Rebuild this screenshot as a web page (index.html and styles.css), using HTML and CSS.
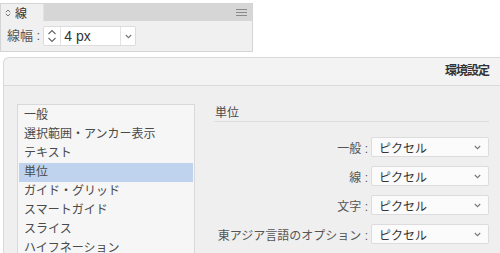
FILE: index.html
```html
<!DOCTYPE html>
<html lang="ja">
<head>
  <meta charset="UTF-8" />
  <meta name="viewport" content="width=device-width, initial-scale=1.0"/>
  <title>線 / 環境設定</title>
  <link rel="stylesheet" href="styles.css">
</head>
<body>

<div class="stroke-panel">
  <div class="panel-tabs">
    <div class="panel-tab">
      <svg class="tab-icon" width="6" height="8" viewBox="0 0 6 8"><path d="M0.8 3.2 L3 1 L5.2 3.2 M0.8 4.8 L3 7 L5.2 4.8" fill="none" stroke="#777" stroke-width="1"/></svg>
      <span>線</span>
    </div>
    <div class="panel-tabs-fill">
      <svg width="11" height="7" viewBox="0 0 11 7"><path d="M0 0.5 H11 M0 3.5 H11 M0 6.5 H11" stroke="#8a8a8a" stroke-width="1"/></svg>
    </div>
  </div>
  <div class="panel-body">
    <span class="field-label">線幅 :</span>
    <div class="stepper">
      <span class="stepper-arrows">
        <svg width="10" height="14" viewBox="0 0 10 14"><path d="M1.5 5 L5 1.5 L8.5 5 M1.5 9 L5 12.5 L8.5 9" fill="none" stroke="#666" stroke-width="1.1"/></svg>
      </span>
      <span class="stepper-value">4 px</span>
      <span class="stepper-drop">
        <svg width="7" height="5" viewBox="0 0 7 5"><path d="M0.8 1 L3.5 3.7 L6.2 1" fill="none" stroke="#777" stroke-width="1.1"/></svg>
      </span>
    </div>
  </div>
</div>

<div class="prefs">
  <div class="prefs-title">環境設定</div>
  <div class="prefs-content">
    <ul class="category-list">
      <li>一般</li>
      <li>選択範囲・アンカー表示</li>
      <li>テキスト</li>
      <li class="selected">単位</li>
      <li>ガイド・グリッド</li>
      <li>スマートガイド</li>
      <li>スライス</li>
      <li>ハイフネーション</li>
    </ul>

    <section class="units">
      <h3>単位</h3>
      <div class="unit-rows">
        <div class="unit-row">
          <label>一般 :</label>
          <div class="select">ピクセル<svg width="7" height="5" viewBox="0 0 7 5"><path d="M0.8 1 L3.5 3.7 L6.2 1" fill="none" stroke="#777" stroke-width="1.1"/></svg></div>
        </div>
        <div class="unit-row">
          <label>線 :</label>
          <div class="select">ピクセル<svg width="7" height="5" viewBox="0 0 7 5"><path d="M0.8 1 L3.5 3.7 L6.2 1" fill="none" stroke="#777" stroke-width="1.1"/></svg></div>
        </div>
        <div class="unit-row">
          <label>文字 :</label>
          <div class="select">ピクセル<svg width="7" height="5" viewBox="0 0 7 5"><path d="M0.8 1 L3.5 3.7 L6.2 1" fill="none" stroke="#777" stroke-width="1.1"/></svg></div>
        </div>
        <div class="unit-row">
          <label>東アジア言語のオプション :</label>
          <div class="select">ピクセル<svg width="7" height="5" viewBox="0 0 7 5"><path d="M0.8 1 L3.5 3.7 L6.2 1" fill="none" stroke="#777" stroke-width="1.1"/></svg></div>
        </div>
      </div>
    </section>
  </div>
</div>

</body>
</html>
```

FILE: styles.css
```css
* {
  box-sizing: border-box;
}

body {
  margin: 0;
  background: #ffffff;
  font-family: "Liberation Sans", "Noto Sans CJK JP", sans-serif;
  font-size: 12px;
  color: #4a4a4a;
  overflow: hidden;
  height: 253px;
}

/* stroke panel */

.stroke-panel {
  margin-top: 3px;
  width: 253px;
  border: 1px solid #d4d4d4;
  background: #f0f0f0;
}

.panel-tabs {
  display: flex;
  height: 17px;
}

.panel-tab {
  width: 42px;
  display: flex;
  align-items: center;
  gap: 4px;
  padding-left: 4px;
  font-size: 12px;
  color: #333;
  background: #f0f0f0;
}

.panel-tabs-fill {
  flex: 1;
  display: flex;
  align-items: center;
  justify-content: flex-end;
  padding-right: 5px;
  background: #d6d6d6;
  border-left: 1px solid #e2e2e2;
}

.panel-body {
  height: 30px;
  display: flex;
  align-items: flex-start;
  padding: 5px 0 0 6px;
}

.field-label {
  font-size: 13px;
  color: #555;
  line-height: 20px;
  margin-right: 3px;
}

.stepper {
  display: flex;
  height: 20px;
  background: #fff;
  border: 1px solid #dcdcdc;
  border-radius: 2px;
}

.stepper-arrows {
  width: 17px;
  display: flex;
  align-items: center;
  justify-content: center;
  border-right: 1px solid #e2e2e2;
}

.stepper-value {
  width: 59px;
  padding-left: 3px;
  font-size: 14px;
  line-height: 18px;
  color: #333;
}

.stepper-drop {
  width: 15px;
  display: flex;
  align-items: center;
  justify-content: center;
  border-left: 1px solid #e2e2e2;
}

/* preferences dialog */

.prefs {
  margin: 5px 0 0 3px;
  border: 1px solid #d9d9d9;
  border-right: none;
  border-bottom: none;
  border-radius: 6px 0 0 0;
  background: #efefef;
  height: 200px;
}

.prefs-title {
  height: 28px;
  border-bottom: 1px solid #dadada;
  background: #f3f3f3;
  border-radius: 6px 0 0 0;
  text-align: right;
  padding-right: 11px;
  font-weight: bold;
  font-size: 12px;
  letter-spacing: -1px;
  line-height: 27px;
  color: #333;
}

.prefs-content {
  display: flex;
  gap: 19px;
  padding: 18px 11px 0 13px;
}

.category-list {
  list-style: none;
  margin: 0;
  padding: 1px;
  width: 178px;
  height: 160px;
  background: #f6f6f6;
  border: 1px solid #d9d9d9;
  border-bottom: none;
}

.category-list li {
  height: 19px;
  line-height: 19px;
  padding-left: 5px;
  font-size: 12px;
  color: #4a4a4a;
}

.category-list li.selected {
  background: #bfd3ee;
}

.units {
  flex: 1;
}

.units h3 {
  margin: 0;
  height: 18px;
  padding: 1px 0 0 1px;
  line-height: 16px;
  font-size: 12px;
  font-weight: normal;
  color: #4a4a4a;
  border-bottom: 1px solid #dedede;
}

.unit-rows {
  display: flex;
  flex-direction: column;
  gap: 9px;
  margin-top: 15px;
}

.unit-row {
  display: flex;
  justify-content: flex-end;
  align-items: center;
  gap: 3px;
}

.unit-row label {
  font-size: 12px;
  color: #555;
}

.select {
  width: 118px;
  height: 20px;
  display: flex;
  align-items: center;
  justify-content: space-between;
  padding: 0 7px 0 7px;
  background: #fbfbfb;
  border: 1px solid #dcdcdc;
  border-radius: 2px;
  font-size: 12px;
  color: #333;
}
```
